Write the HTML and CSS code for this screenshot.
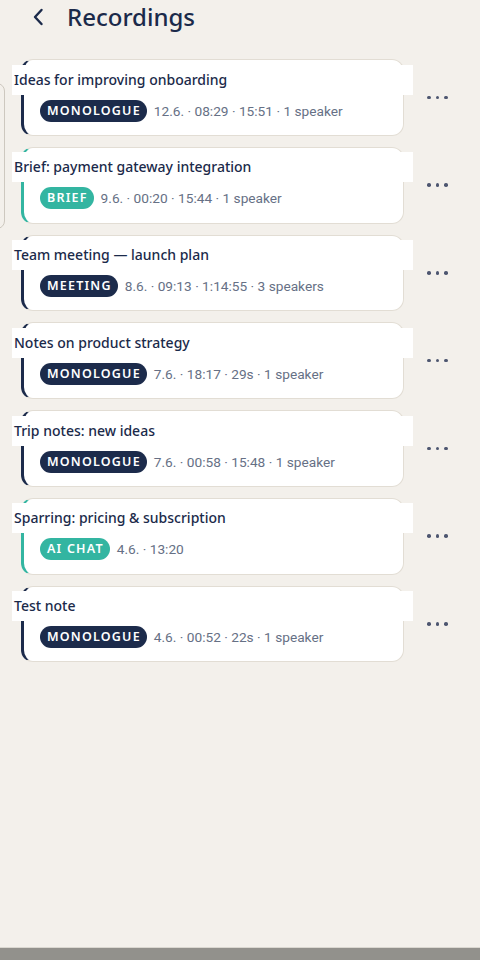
FILE: index.html
```html
<!DOCTYPE html>
<html lang="en">
<head>
<meta charset="utf-8">
<title>Recordings</title>
<link rel="stylesheet" href="styles.css">
</head>
<body>
<header class="topbar">
  <button class="back" aria-label="Back">
    <svg width="12" height="18" viewBox="0 0 12 18"><path d="M9.5 2 L3 9 L9.5 16" fill="none" stroke="#1b2a4a" stroke-width="2.4" stroke-linecap="round" stroke-linejoin="round"/></svg>
  </button>
  <h1 class="page-title">Recordings</h1>
</header>

<div class="side-peek"></div>

<main class="list">
  <div class="row">
    <article class="card navy">
      <div class="title">Ideas for improving onboarding</div>
      <div class="meta-row"><span class="badge navy">MONOLOGUE</span><span class="meta">12.6. · 08:29 · 15:51 · 1 speaker</span></div>
    </article>
    <div class="more"><i></i><i></i><i></i></div>
  </div>
  <div class="row">
    <article class="card teal">
      <div class="title">Brief: payment gateway integration</div>
      <div class="meta-row"><span class="badge teal">BRIEF</span><span class="meta">9.6. · 00:20 · 15:44 · 1 speaker</span></div>
    </article>
    <div class="more"><i></i><i></i><i></i></div>
  </div>
  <div class="row">
    <article class="card navy">
      <div class="title">Team meeting — launch plan</div>
      <div class="meta-row"><span class="badge navy">MEETING</span><span class="meta">8.6. · 09:13 · 1:14:55 · 3 speakers</span></div>
    </article>
    <div class="more"><i></i><i></i><i></i></div>
  </div>
  <div class="row">
    <article class="card navy">
      <div class="title">Notes on product strategy</div>
      <div class="meta-row"><span class="badge navy">MONOLOGUE</span><span class="meta">7.6. · 18:17 · 29s · 1 speaker</span></div>
    </article>
    <div class="more"><i></i><i></i><i></i></div>
  </div>
  <div class="row">
    <article class="card navy">
      <div class="title">Trip notes: new ideas</div>
      <div class="meta-row"><span class="badge navy">MONOLOGUE</span><span class="meta">7.6. · 00:58 · 15:48 · 1 speaker</span></div>
    </article>
    <div class="more"><i></i><i></i><i></i></div>
  </div>
  <div class="row">
    <article class="card teal">
      <div class="title">Sparring: pricing &amp; subscription</div>
      <div class="meta-row"><span class="badge teal">AI CHAT</span><span class="meta">4.6. · 13:20</span></div>
    </article>
    <div class="more"><i></i><i></i><i></i></div>
  </div>
  <div class="row">
    <article class="card navy">
      <div class="title">Test note</div>
      <div class="meta-row"><span class="badge navy">MONOLOGUE</span><span class="meta">4.6. · 00:52 · 22s · 1 speaker</span></div>
    </article>
    <div class="more"><i></i><i></i><i></i></div>
  </div>
</main>

<div class="bottom-bar"></div>
</body>
</html>
```

FILE: styles.css
```css
* { box-sizing: border-box; }

html, body {
  margin: 0;
  padding: 0;
  background: #f3f0eb;
  height: 100%;
}

body {
  font-family: "Noto Sans", "Roboto", sans-serif;
  color: #1b2a4a;
  position: relative;
  overflow: hidden;
}

.topbar {
  display: flex;
  align-items: center;
  height: 34px;
  padding-left: 32px;
}

.back {
  background: none;
  border: 0;
  padding: 0;
  width: 14px;
  height: 18px;
  display: flex;
  align-items: center;
  cursor: pointer;
}

.page-title {
  margin: 0 0 0 21px;
  font-size: 24px;
  font-weight: 500;
  line-height: 34px;
  color: #1b2a4a;
}

.side-peek {
  position: absolute;
  left: -20px;
  top: 83px;
  width: 25px;
  height: 146px;
  border: 1px solid #cdc8bf;
  border-radius: 8px;
}

.list {
  display: flex;
  flex-direction: column;
  gap: 11px;
  padding: 25px 0 0 21px;
}

.row {
  display: flex;
  align-items: center;
}

.card {
  width: 383px;
  background: #fff;
  border: 1.5px solid #e2ddd4;
  border-left-width: 3px;
  border-radius: 12px;
  padding: 4.5px 16px 13.25px 16px;
}

.card.navy { border-left-color: #1c2b4b; }
.card.teal { border-left-color: #33b5a1; }

.title {
  background: #fff;
  margin: 0 -26px 0 -28px;
  padding-left: 2px;
  font-size: 14px;
  font-weight: 500;
  line-height: 30px;
  height: 30px;
  color: #1b2a4a;
  white-space: nowrap;
}

.meta-row {
  display: flex;
  align-items: center;
  gap: 7px;
  margin-top: 5px;
  height: 22px;
}

.badge {
  height: 22px;
  line-height: 22px;
  border-radius: 11px;
  padding: 0 6px 0 7px;
  font-family: "Noto Sans", sans-serif;
  font-size: 12.5px;
  font-weight: 600;
  letter-spacing: 1.2px;
  color: #fff;
}

.badge.navy { background: #1c2b4b; }
.badge.teal { background: #33b5a1; }

.meta {
  font-family: "Roboto", sans-serif;
  font-size: 13.7px;
  color: #667085;
  white-space: nowrap;
}

.more {
  display: flex;
  gap: 5px;
  margin-left: 23px;
}

.more i {
  display: block;
  width: 3.5px;
  height: 3.5px;
  border-radius: 50%;
  background: #4d5670;
}

.bottom-bar {
  position: absolute;
  left: 0;
  right: 0;
  bottom: 0;
  height: 13px;
  background: #92918c;
  border-top: 1px solid #dad7d0;
}
```
